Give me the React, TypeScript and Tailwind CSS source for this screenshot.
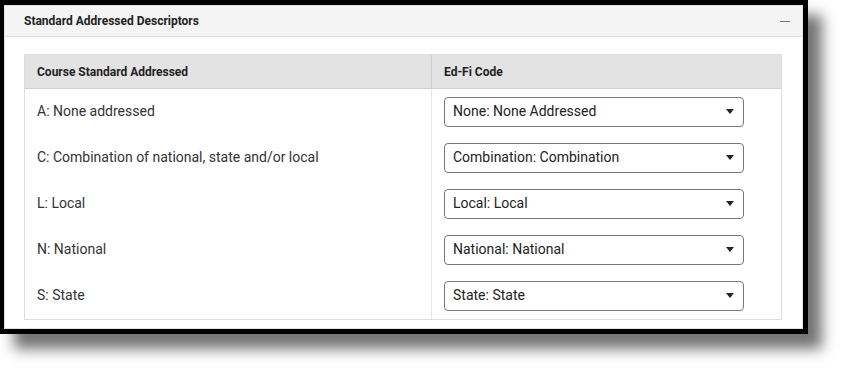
const rows = [
  { label: 'A: None addressed', code: 'None: None Addressed' },
  { label: 'C: Combination of national, state and/or local', code: 'Combination: Combination' },
  { label: 'L: Local', code: 'Local: Local' },
  { label: 'N: National', code: 'National: National' },
  { label: 'S: State', code: 'State: State' },
]

const Caret = () => (
  <svg width="8" height="5" viewBox="0 0 8 5" className="shrink-0">
    <path d="M0 0 L8 0 L4 5 Z" fill="#222" />
  </svg>
)

const App = () => {
  return (
    <div className="h-[368px] w-[842px] bg-white font-['Roboto',sans-serif] text-[#333]">
      {/* framed screenshot */}
      <div className="h-[334px] w-[808px] border-t-[5px] border-r-[5px] border-b-[5px] border-l-4 border-black bg-white shadow-[14px_15px_13px_rgba(0,0,0,0.55)]">
        <div className="flex h-full flex-col border border-[#e2e2e2]">
          {/* panel header */}
          <div className="flex h-[31px] items-center justify-between border-b border-[#dcdcdc] bg-[#f4f4f4] pr-[12px] pl-[19px]">
            <span className="text-[12px] font-bold text-[#222]">Standard Addressed Descriptors</span>
            <span className="block h-px w-[10px] bg-[#777]" />
          </div>

          {/* panel body */}
          <div className="pt-[17px] pl-[19px]">
            <div className="w-[758px] border border-[#dedede]">
              <div className="flex h-[34px] border-b border-[#cfcfcf] bg-[#e3e3e3] text-[12px] font-bold text-[#222]">
                <div className="flex w-[407px] items-center border-r border-[#cfcfcf] pl-[12px]">
                  Course Standard Addressed
                </div>
                <div className="flex flex-1 items-center pl-[12px]">Ed-Fi Code</div>
              </div>
              {rows.map((r) => (
                <div key={r.label} className="flex h-[46px] text-[14px]">
                  <div className="flex w-[407px] items-center border-r border-[#e6e6e6] pb-px pl-[12px] text-[#333]">
                    {r.label}
                  </div>
                  <div className="flex flex-1 items-center pb-px pl-[12px]">
                    <div className="flex h-[30px] w-[300px] items-center justify-between rounded-[4px] border border-[#777] bg-white pr-[9px] pl-[8px] text-[#222]">
                      <span>{r.code}</span>
                      <Caret />
                    </div>
                  </div>
                </div>
              ))}
            </div>
          </div>
        </div>
      </div>
    </div>
  )
}

export default App
